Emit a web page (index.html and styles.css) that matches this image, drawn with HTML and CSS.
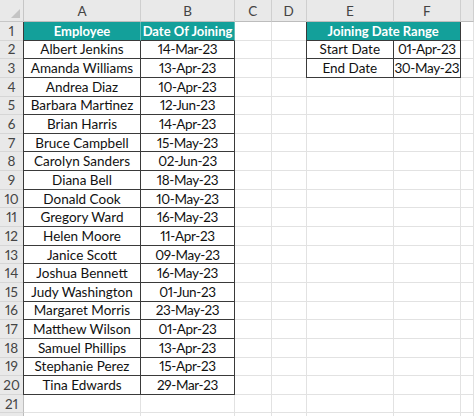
FILE: index.html
```html
<!DOCTYPE html>
<html>
<head>
<meta charset="utf-8">
<link rel="stylesheet" href="styles.css">
</head>
<body>
<div class="sheet">
  <div class="corner"><span class="tri"></span></div>
  <div class="ch">A</div><div class="ch">B</div><div class="ch">C</div><div class="ch">D</div><div class="ch">E</div><div class="ch">F</div><div class="ch"></div>

  <div class="rh">1</div><div class="c h ta">Employee</div><div class="c h">Date Of Joining</div><div class="c"></div><div class="c"></div><div class="c h ta span2">Joining Date Range</div><div class="c"></div>
  <div class="rh">2</div><div class="c t ta">Albert Jenkins</div><div class="c t d">14-Mar-23</div><div class="c"></div><div class="c"></div><div class="c t ta">Start Date</div><div class="c t d">01-Apr-23</div><div class="c"></div>
  <div class="rh">3</div><div class="c t ta">Amanda Williams</div><div class="c t d">13-Apr-23</div><div class="c"></div><div class="c"></div><div class="c t ta">End Date</div><div class="c t d">30-May-23</div><div class="c"></div>
  <div class="rh">4</div><div class="c t ta">Andrea Diaz</div><div class="c t d">10-Apr-23</div><div class="c"></div><div class="c"></div><div class="c"></div><div class="c"></div><div class="c"></div>
  <div class="rh">5</div><div class="c t ta">Barbara Martinez</div><div class="c t d">12-Jun-23</div><div class="c"></div><div class="c"></div><div class="c"></div><div class="c"></div><div class="c"></div>
  <div class="rh">6</div><div class="c t ta">Brian Harris</div><div class="c t d">14-Apr-23</div><div class="c"></div><div class="c"></div><div class="c"></div><div class="c"></div><div class="c"></div>
  <div class="rh">7</div><div class="c t ta">Bruce Campbell</div><div class="c t d">15-May-23</div><div class="c"></div><div class="c"></div><div class="c"></div><div class="c"></div><div class="c"></div>
  <div class="rh">8</div><div class="c t ta">Carolyn Sanders</div><div class="c t d">02-Jun-23</div><div class="c"></div><div class="c"></div><div class="c"></div><div class="c"></div><div class="c"></div>
  <div class="rh">9</div><div class="c t ta">Diana Bell</div><div class="c t d">18-May-23</div><div class="c"></div><div class="c"></div><div class="c"></div><div class="c"></div><div class="c"></div>
  <div class="rh">10</div><div class="c t ta">Donald Cook</div><div class="c t d">10-May-23</div><div class="c"></div><div class="c"></div><div class="c"></div><div class="c"></div><div class="c"></div>
  <div class="rh">11</div><div class="c t ta">Gregory Ward</div><div class="c t d">16-May-23</div><div class="c"></div><div class="c"></div><div class="c"></div><div class="c"></div><div class="c"></div>
  <div class="rh">12</div><div class="c t ta">Helen Moore</div><div class="c t d">11-Apr-23</div><div class="c"></div><div class="c"></div><div class="c"></div><div class="c"></div><div class="c"></div>
  <div class="rh">13</div><div class="c t ta">Janice Scott</div><div class="c t d">09-May-23</div><div class="c"></div><div class="c"></div><div class="c"></div><div class="c"></div><div class="c"></div>
  <div class="rh">14</div><div class="c t ta">Joshua Bennett</div><div class="c t d">16-May-23</div><div class="c"></div><div class="c"></div><div class="c"></div><div class="c"></div><div class="c"></div>
  <div class="rh">15</div><div class="c t ta">Judy Washington</div><div class="c t d">01-Jun-23</div><div class="c"></div><div class="c"></div><div class="c"></div><div class="c"></div><div class="c"></div>
  <div class="rh">16</div><div class="c t ta">Margaret Morris</div><div class="c t d">23-May-23</div><div class="c"></div><div class="c"></div><div class="c"></div><div class="c"></div><div class="c"></div>
  <div class="rh">17</div><div class="c t ta">Matthew Wilson</div><div class="c t d">01-Apr-23</div><div class="c"></div><div class="c"></div><div class="c"></div><div class="c"></div><div class="c"></div>
  <div class="rh">18</div><div class="c t ta">Samuel Phillips</div><div class="c t d">13-Apr-23</div><div class="c"></div><div class="c"></div><div class="c"></div><div class="c"></div><div class="c"></div>
  <div class="rh">19</div><div class="c t ta">Stephanie Perez</div><div class="c t d">15-Apr-23</div><div class="c"></div><div class="c"></div><div class="c"></div><div class="c"></div><div class="c"></div>
  <div class="rh">20</div><div class="c t ta">Tina Edwards</div><div class="c t d">29-Mar-23</div><div class="c"></div><div class="c"></div><div class="c"></div><div class="c"></div><div class="c"></div>
  <div class="rh">21</div><div class="c"></div><div class="c"></div><div class="c"></div><div class="c"></div><div class="c"></div><div class="c"></div><div class="c"></div>
  <div class="rh"></div><div class="c"></div><div class="c"></div><div class="c"></div><div class="c"></div><div class="c"></div><div class="c"></div><div class="c"></div>
</div>
</body>
</html>
```

FILE: styles.css
```css
html, body {
  margin: 0;
  padding: 0;
  background: #ffffff;
  overflow: hidden;
}
.sheet {
  display: grid;
  grid-template-columns: 24px 117px 94px 36.5px 35.2px 87.3px 66.7px 1fr;
  grid-template-rows: 22px repeat(22, 18.65px);
  width: 474px;
  height: 416px;
  overflow: hidden;
  font-family: "Lato", "Liberation Sans", sans-serif;
  font-size: 13.5px;
  font-variant-numeric: proportional-nums;
  color: #111111;
}
.corner {
  background: #e9e9e9;
  border-right: 1px solid #c6c6c6;
  border-bottom: 1px solid #c6c6c6;
  position: relative;
}
.tri {
  position: absolute;
  right: 3px;
  bottom: 3px;
  width: 0;
  height: 0;
  border-left: 9px solid transparent;
  border-bottom: 9px solid #c4c4c4;
}
.ch {
  background: #e9e9e9;
  border-right: 1px solid #cfcfcf;
  border-bottom: 1px solid #bdbdbd;
  display: flex;
  align-items: center;
  justify-content: center;
  color: #444;
  font-size: 13.5px;
}
.rh {
  background: #e9e9e9;
  border-right: 1px solid #bdbdbd;
  border-bottom: 1px solid #d6d6d6;
  display: flex;
  align-items: center;
  justify-content: center;
  color: #444;
  font-size: 13.5px;
}
.c {
  border-right: 1px solid #e2e2e2;
  border-bottom: 1px solid #e2e2e2;
  display: flex;
  align-items: center;
  justify-content: center;
  white-space: nowrap;
  overflow: hidden;
}
.t {
  border-right-color: #3a3a3a;
  border-bottom-color: #3a3a3a;
}
.d {
  letter-spacing: -0.35px;
}
.ta {
  box-shadow: -1px 0 0 #3a3a3a;
}
.h {
  background: #13a09a;
  color: #ffffff;
  font-weight: 700;
  font-size: 13px;
  border-right-color: #5fbdb9;
  border-bottom-color: #3a3a3a;
}
.span2 {
  grid-column: span 2;
  border-right-color: #3a3a3a;
}
```
